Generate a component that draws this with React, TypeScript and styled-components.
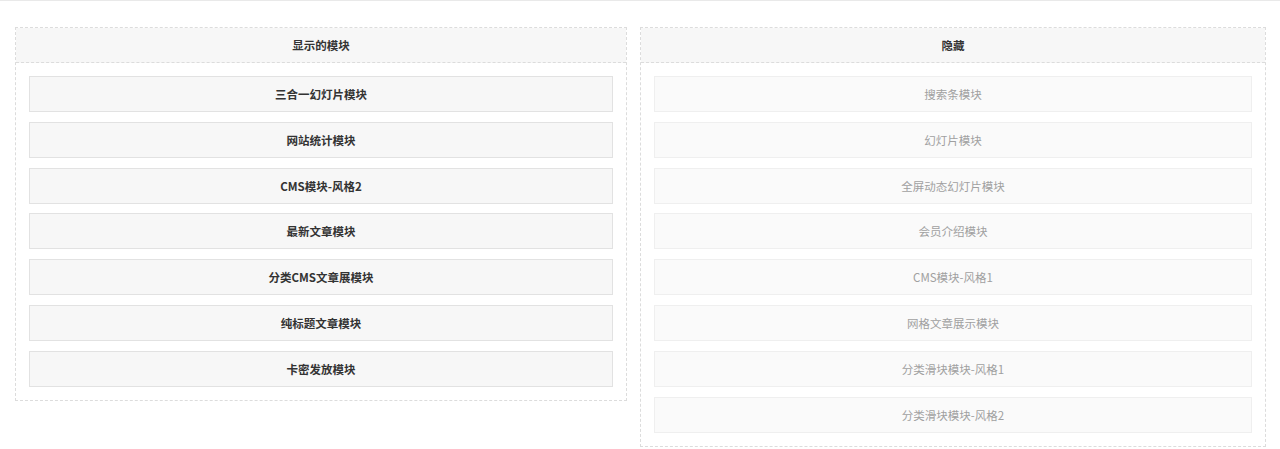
import React from "react";
import styled, { createGlobalStyle } from "styled-components";

const Global = createGlobalStyle`
  html, body { margin: 0; padding: 0; background: #fff; }
  body { font-family: "Microsoft YaHei", "Noto Sans CJK SC", "Noto Sans", sans-serif; }
`;

const Page = styled.div`
  border-top: 1px solid #e9e9e9;
  padding: 26px 14px 0 15px;
  display: grid;
  grid-template-columns: 612px 626px;
  column-gap: 13px;
  align-items: start;
`;

const Panel = styled.section`
  border: 1px dashed #dcdcdc;
  box-sizing: border-box;
`;

const Header = styled.div`
  height: 34px;
  background: #f7f7f7;
  border-bottom: 1px dashed #dcdcdc;
  display: flex;
  align-items: center;
  justify-content: center;
  font-size: 11.5px;
  font-weight: bold;
  color: #333;
`;

const List = styled.div`
  padding: 13px 13px 13px;
  display: flex;
  flex-direction: column;
  gap: 9.8px;
`;

const Item = styled.div<{ $muted?: boolean }>`
  height: 36px;
  box-sizing: border-box;
  border: 1px solid ${(p) => (p.$muted ? "#efefef" : "#e2e2e2")};
  background: ${(p) => (p.$muted ? "#fafafa" : "#f7f7f7")};
  display: flex;
  align-items: center;
  justify-content: center;
  font-size: 11.5px;
  font-weight: ${(p) => (p.$muted ? "normal" : "bold")};
  color: ${(p) => (p.$muted ? "#a0a0a0" : "#333")};
`;

const shown = [
  "三合一幻灯片模块",
  "网站统计模块",
  "CMS模块-风格2",
  "最新文章模块",
  "分类CMS文章展模块",
  "纯标题文章模块",
  "卡密发放模块",
];

const hidden = [
  "搜索条模块",
  "幻灯片模块",
  "全屏动态幻灯片模块",
  "会员介绍模块",
  "CMS模块-风格1",
  "网格文章展示模块",
  "分类滑块模块-风格1",
  "分类滑块模块-风格2",
];

export default function App() {
  return (
    <>
      <Global />
      <Page>
        <Panel>
          <Header>显示的模块</Header>
          <List>
            {shown.map((t) => (
              <Item key={t}>{t}</Item>
            ))}
          </List>
        </Panel>
        <Panel>
          <Header>隐藏</Header>
          <List>
            {hidden.map((t) => (
              <Item key={t} $muted>
                {t}
              </Item>
            ))}
          </List>
        </Panel>
      </Page>
    </>
  );
}
